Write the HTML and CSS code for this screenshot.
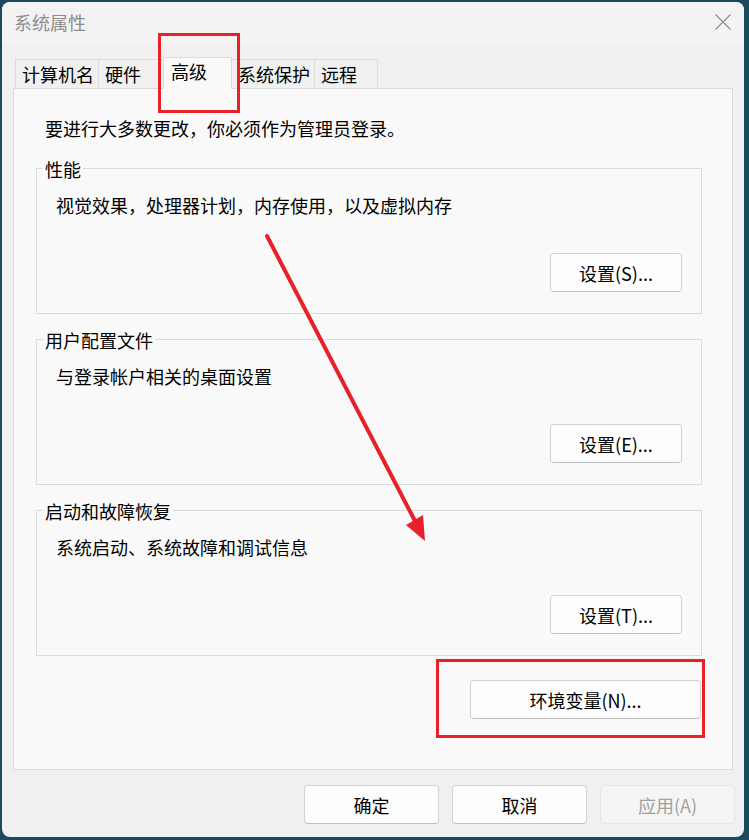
FILE: index.html
```html
<!DOCTYPE html>
<html lang="zh-CN">
<head>
  <meta charset="UTF-8" />
  <title>系统属性</title>
  <link rel="stylesheet" href="styles.css">
</head>
<body>

<div class="window">

  <div class="titlebar">
    <span class="title">系统属性</span>
    <svg class="close" width="16" height="16" viewBox="0 0 16 16">
      <path d="M0.5 0.5 L15.5 15.5 M15.5 0.5 L0.5 15.5" stroke="#8a8a8a" stroke-width="1.1" fill="none" />
    </svg>
  </div>

  <div class="content">

    <!-- Tabs -->
    <div class="tabs">
      <div class="tab w1">计算机名</div>
      <div class="tab w2">硬件</div>
      <div class="tab active">高级</div>
      <div class="tab w4">系统保护</div>
      <div class="tab w5">远程</div>
    </div>

    <div class="panel">
      <p class="intro">要进行大多数更改，你必须作为管理员登录。</p>

      <div class="group">
        <span class="group-title">性能</span>
        <p class="desc">视觉效果，处理器计划，内存使用，以及虚拟内存</p>
        <div class="group-actions">
          <button class="btn">设置(S)...</button>
        </div>
      </div>

      <div class="group">
        <span class="group-title">用户配置文件</span>
        <p class="desc">与登录帐户相关的桌面设置</p>
        <div class="group-actions">
          <button class="btn">设置(E)...</button>
        </div>
      </div>

      <div class="group">
        <span class="group-title">启动和故障恢复</span>
        <p class="desc">系统启动、系统故障和调试信息</p>
        <div class="group-actions">
          <button class="btn">设置(T)...</button>
        </div>
      </div>

      <div class="env-row">
        <button class="btn btn-env">环境变量(N)...</button>
      </div>
    </div>

    <!-- Botões do rodapé -->
    <div class="footer">
      <button class="btn btn-foot">确定</button>
      <button class="btn btn-foot">取消</button>
      <button class="btn btn-foot disabled">应用(A)</button>
    </div>

  </div>
</div>

<!-- Marcações em vermelho -->
<svg class="marks" width="749" height="840" viewBox="0 0 749 840">
  <rect x="159.5" y="34.5" width="79" height="77" fill="none" stroke="#e8202a" stroke-width="3" />
  <rect x="437.5" y="660.5" width="266" height="76" fill="none" stroke="#e8202a" stroke-width="3" />
  <line x1="267" y1="236" x2="415" y2="521" stroke="#e8202a" stroke-width="4" stroke-linecap="round" />
  <polygon points="425,541 406,525 423,515" fill="#e8202a" />
</svg>

</body>
</html>
```

FILE: styles.css
```css
body {
  margin: 0;
  padding: 2px 0 0 2px;
  background: #1b4a5c;
  font-family: "Noto Sans CJK SC", "Noto Sans", sans-serif;
  font-size: 18px;
  color: #000;
  width: 749px;
  height: 840px;
  box-sizing: border-box;
  overflow: hidden;
}
.window {
  width: 742px;
  height: 835px;
  background: #f0f0f0;
  border-radius: 8px;
  overflow: hidden;
}
.titlebar {
  height: 43px;
  background: #f3f3f4;
  display: flex;
  align-items: center;
  justify-content: space-between;
  padding: 0 12px 0 12px;
}
.title {
  color: #8c8c8c;
  line-height: 24px;
  margin-top: -3px;
}
.close {
  margin-top: -3px;
  margin-right: 1px;
}
.content {
  padding: 0 0 0 11px;
}
.tabs {
  display: flex;
  align-items: flex-end;
  height: 31px;
  margin-top: 12px;
  padding-left: 2px;
}
.tab {
  height: 29px;
  box-sizing: border-box;
  border: 1px solid #dcdcdc;
  border-bottom: none;
  border-right: none;
  padding-left: 6px;
  line-height: 28px;
  background: #f0f0f0;
}
.tab.w1 { width: 83px; }
.tab.w2 { width: 65px; }
.tab.w4 { width: 82px; }
.tab.w5 { width: 64px; border-right: 1px solid #dcdcdc; }
.tab.active {
  width: 69px;
  height: 32px;
  margin-bottom: -1px;
  padding-left: 7px;
  line-height: 26px;
  background: #f9f9f9;
  border-right: 1px solid #dcdcdc;
  position: relative;
  z-index: 1;
}
.tab.active + .tab {
  border-left: none;
}
.panel {
  width: 720px;
  height: 682px;
  box-sizing: border-box;
  background: #f9f9f9;
  border: 1px solid #dcdcdc;
  padding: 27px 30px 0 22px;
}
.intro {
  margin: 0 0 28px 9px;
  line-height: 24px;
}
.group {
  height: 146px;
  box-sizing: border-box;
  border: 1px solid #dcdcdc;
  padding: 0 19px 0 6px;
  margin-bottom: 25px;
}
.group-title {
  display: table;
  margin-top: -12px;
  padding: 0 2px;
  line-height: 24px;
  background: #f9f9f9;
}
.desc {
  margin: 12px 0 0 13px;
  line-height: 24px;
}
.group-actions {
  display: flex;
  justify-content: flex-end;
  margin-top: 36px;
}
.btn {
  font-family: "Noto Sans CJK SC", "Noto Sans", sans-serif;
  font-size: 18px;
  color: #000;
  background: #fdfdfd;
  border: 1px solid #d3d3d3;
  border-bottom-color: #bfbfbf;
  border-radius: 4px;
  height: 39px;
  width: 132px;
  padding: 0;
  line-height: 24px;
  cursor: pointer;
}
.env-row {
  display: flex;
  justify-content: flex-end;
  margin-top: -1px;
  padding-right: 1px;
}
.btn-env {
  width: 231px;
}
.footer {
  display: flex;
  justify-content: flex-end;
  gap: 13px;
  margin-top: 15px;
  padding-right: 9px;
}
.btn-foot {
  width: 135px;
}
.btn.disabled {
  background: #f5f5f5;
  color: #a0a0a0;
  border-color: #e6e6e6;
  cursor: default;
}
.marks {
  position: absolute;
  left: 0;
  top: 0;
  pointer-events: none;
}
```
